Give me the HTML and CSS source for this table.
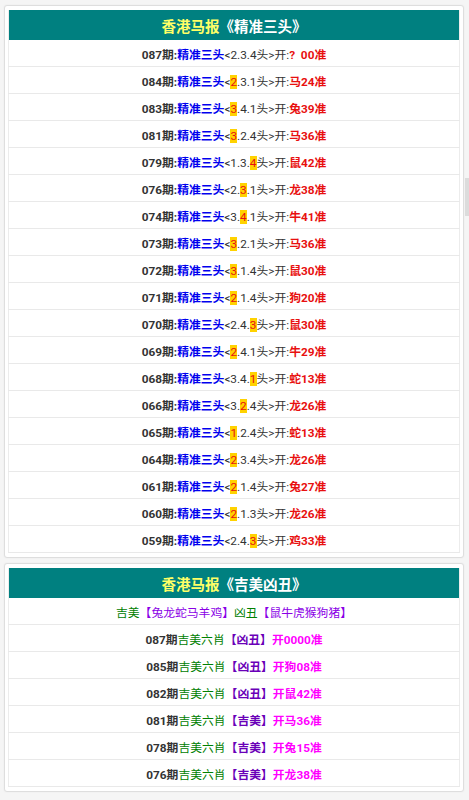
FILE: index.html
```html
<!DOCTYPE html>
<html lang="zh-CN">
<head>
    <meta charset="UTF-8">
    <meta name="viewport" content="width=device-width, initial-scale=1.0">
    <title>香港马报</title>
    <link rel="stylesheet" href="styles.css">
</head>
<body>

<div class="box">
    <table class="list">
        <tr><th><span class="hl">香港马报</span>《精准三头》</th></tr>
        <tr><td>087期:<span class="blue">精准三头</span><span class="thin">&lt;2.3.4头&gt;开:</span><span class="red">? &nbsp;00准</span></td></tr>
        <tr><td>084期:<span class="blue">精准三头</span><span class="thin">&lt;<span class="hit">2</span>.3.1头&gt;开:</span><span class="red">马24准</span></td></tr>
        <tr><td>083期:<span class="blue">精准三头</span><span class="thin">&lt;<span class="hit">3</span>.4.1头&gt;开:</span><span class="red">兔39准</span></td></tr>
        <tr><td>081期:<span class="blue">精准三头</span><span class="thin">&lt;<span class="hit">3</span>.2.4头&gt;开:</span><span class="red">马36准</span></td></tr>
        <tr><td>079期:<span class="blue">精准三头</span><span class="thin">&lt;1.3.<span class="hit">4</span>头&gt;开:</span><span class="red">鼠42准</span></td></tr>
        <tr><td>076期:<span class="blue">精准三头</span><span class="thin">&lt;2.<span class="hit">3</span>.1头&gt;开:</span><span class="red">龙38准</span></td></tr>
        <tr><td>074期:<span class="blue">精准三头</span><span class="thin">&lt;3.<span class="hit">4</span>.1头&gt;开:</span><span class="red">牛41准</span></td></tr>
        <tr><td>073期:<span class="blue">精准三头</span><span class="thin">&lt;<span class="hit">3</span>.2.1头&gt;开:</span><span class="red">马36准</span></td></tr>
        <tr><td>072期:<span class="blue">精准三头</span><span class="thin">&lt;<span class="hit">3</span>.1.4头&gt;开:</span><span class="red">鼠30准</span></td></tr>
        <tr><td>071期:<span class="blue">精准三头</span><span class="thin">&lt;<span class="hit">2</span>.1.4头&gt;开:</span><span class="red">狗20准</span></td></tr>
        <tr><td>070期:<span class="blue">精准三头</span><span class="thin">&lt;2.4.<span class="hit">3</span>头&gt;开:</span><span class="red">鼠30准</span></td></tr>
        <tr><td>069期:<span class="blue">精准三头</span><span class="thin">&lt;<span class="hit">2</span>.4.1头&gt;开:</span><span class="red">牛29准</span></td></tr>
        <tr><td>068期:<span class="blue">精准三头</span><span class="thin">&lt;3.4.<span class="hit">1</span>头&gt;开:</span><span class="red">蛇13准</span></td></tr>
        <tr><td>066期:<span class="blue">精准三头</span><span class="thin">&lt;3.<span class="hit">2</span>.4头&gt;开:</span><span class="red">龙26准</span></td></tr>
        <tr><td>065期:<span class="blue">精准三头</span><span class="thin">&lt;<span class="hit">1</span>.2.4头&gt;开:</span><span class="red">蛇13准</span></td></tr>
        <tr><td>064期:<span class="blue">精准三头</span><span class="thin">&lt;<span class="hit">2</span>.3.4头&gt;开:</span><span class="red">龙26准</span></td></tr>
        <tr><td>061期:<span class="blue">精准三头</span><span class="thin">&lt;<span class="hit">2</span>.1.4头&gt;开:</span><span class="red">兔27准</span></td></tr>
        <tr><td>060期:<span class="blue">精准三头</span><span class="thin">&lt;<span class="hit">2</span>.1.3头&gt;开:</span><span class="red">龙26准</span></td></tr>
        <tr><td>059期:<span class="blue">精准三头</span><span class="thin">&lt;2.4.<span class="hit">3</span>头&gt;开:</span><span class="red">鸡33准</span></td></tr>
    </table>
</div>

<div class="box">
    <table class="list">
        <tr><th><span class="hl">香港马报</span>《吉美凶丑》</th></tr>
        <tr><td class="thin"><span class="green">吉美</span><span class="purple">【兔龙蛇马羊鸡】</span><span class="green">凶丑</span><span class="purple">【鼠牛虎猴狗猪】</span></td></tr>
        <tr><td>087期<span class="green thin">吉美六肖</span><span class="violet">【凶丑】</span><span class="pink">开0000准</span></td></tr>
        <tr><td>085期<span class="green thin">吉美六肖</span><span class="violet">【凶丑】</span><span class="pink">开狗08准</span></td></tr>
        <tr><td>082期<span class="green thin">吉美六肖</span><span class="violet">【凶丑】</span><span class="pink">开鼠42准</span></td></tr>
        <tr><td>081期<span class="green thin">吉美六肖</span><span class="violet">【吉美】</span><span class="pink">开马36准</span></td></tr>
        <tr><td>078期<span class="green thin">吉美六肖</span><span class="violet">【吉美】</span><span class="pink">开兔15准</span></td></tr>
        <tr><td>076期<span class="green thin">吉美六肖</span><span class="violet">【吉美】</span><span class="pink">开龙38准</span></td></tr>
    </table>
</div>

<div class="scroll-thumb"></div>

</body>
</html>
```

FILE: styles.css
```css
/* 页面整体 */
body {
    margin: 0;
    padding: 5px 5px 0 4px;
    background: #f5f5f5;
    font-family: Roboto, "Noto Sans CJK SC", sans-serif;
    font-weight: bold;
    color: #333;
}
.box {
    background: #fff;
    border: 1px solid #dedede;
    border-radius: 3px;
    padding: 4px 3px;
    margin-bottom: 5px;
    box-shadow: 0 0 2px rgba(0,0,0,0.06);
}
.list {
    width: 100%;
    border-collapse: collapse;
    border-left: 1px solid #ececec;
    border-right: 1px solid #ececec;
}
.list th {
    height: 30px;
    padding: 0;
    background: #008080;
    color: #fff;
    font-size: 14.5px;
    font-weight: bold;
    text-align: center;
}
.list td {
    height: 26px;
    padding: 0;
    border-bottom: 1px solid #e9e9e9;
    font-size: 11.8px;
    text-align: center;
    white-space: nowrap;
}
.thin { font-weight: normal; }
.hl { color: #ffff66; }
.blue { color: #0000ee; }
.red { color: #e81010; }
.hit { background: #ffd200; color: #e81010; }
.green { color: #008000; }
.purple { color: #8a00e6; }
.violet { color: #6a00b8; }
.pink { color: #f0f; }

/* 右侧滚动条 */
.scroll-thumb {
    position: fixed;
    right: 0;
    top: 178px;
    width: 4px;
    height: 38px;
    background: #dcdcdc;
}
```
